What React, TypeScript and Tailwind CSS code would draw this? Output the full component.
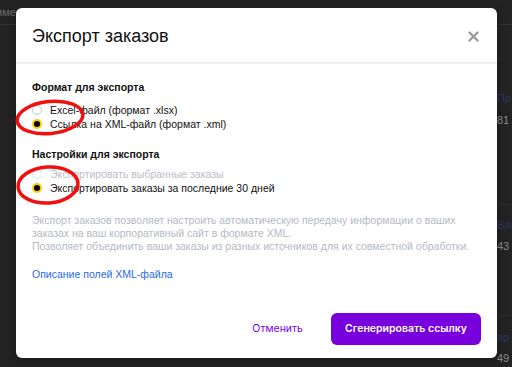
import React from "react";

function Radio({ checked, disabled, label }: { checked?: boolean; disabled?: boolean; label: string }) {
  return (
    <div className="flex items-center h-[14px]">
      {checked ? (
        <span className="w-[10px] h-[10px] rounded-full border-[2px] border-[#ffcc00] bg-black" />
      ) : (
        <span className={"w-[10px] h-[10px] rounded-full border " + (disabled ? "border-[#e4e4e4]" : "border-[#c8c8c8]")} />
      )}
      <span className={"ml-[8px] text-[10.5px] leading-[14px] " + (disabled ? "text-[#b9bdc6]" : "text-[#111]")}>{label}</span>
    </div>
  );
}

export default function App() {
  return (
    <div
      className="relative w-[512px] h-[367px] overflow-hidden bg-[#232323]"
      style={{ fontFamily: '"Liberation Sans", Arial, sans-serif' }}
    >
      {/* background page */}
      <div className="flex flex-col w-full h-full">
        <div className="h-[25px] border-b border-[#313131] flex items-center">
          <span className="ml-[-4px] text-[11px] text-[#6e6e6e]">имен</span>
        </div>
        <div className="flex-1 flex justify-end">
          <div className="w-[15px] flex flex-col text-[11px] overflow-hidden">
            <div className="h-[180px] border-b border-[#2e2e2e] pt-[65px] flex flex-col gap-[5px]">
              <span className="text-[#2b3561] whitespace-nowrap">Пр</span>
              <span className="text-[#8a8a8a] whitespace-nowrap">81</span>
            </div>
            <div className="h-[111px] border-b border-[#2e2e2e] pt-[12px] flex flex-col gap-[4px]">
              <span className="text-[#2b3561] whitespace-nowrap">Вла</span>
              <span className="text-[#8a8a8a] whitespace-nowrap">43</span>
            </div>
            <div className="pt-[13px] flex flex-col gap-[4px]">
              <span className="text-[#2b3561] whitespace-nowrap">ар</span>
              <span className="text-[#8a8a8a] whitespace-nowrap">49</span>
            </div>
          </div>
        </div>
      </div>

      {/* modal */}
      <div className="absolute left-[16px] top-[8px] w-[481px] h-[350px] bg-white rounded-[6px] flex flex-col shadow-[0_2px_8px_rgba(0,0,0,0.3)]">
        <div className="h-[56px] border-b-2 border-[#efefef] flex items-center justify-between pl-[16px] pr-[18px]">
          <span className="text-[18px] text-[#111] pt-[2px]">Экспорт заказов</span>
          <svg width="11" height="11" viewBox="0 0 11 11" className="mt-[2px]">
            <path d="M1.5 1.5 L9.5 9.5 M9.5 1.5 L1.5 9.5" stroke="#9a9a9a" strokeWidth="2.4" strokeLinecap="round" />
          </svg>
        </div>
        <div className="flex flex-col px-[16px] pt-[16px]">
          <div className="text-[10.5px] leading-[14px] font-bold text-[#111]">Формат для экспорта</div>
          <div className="flex flex-col mt-[9px]">
            <Radio label="Excel-файл (формат .xlsx)" />
            <Radio checked label="Ссылка на XML-файл (формат .xml)" />
          </div>
          <div className="text-[10.5px] leading-[14px] font-bold text-[#111] mt-[16px]">Настройки для экспорта</div>
          <div className="flex flex-col mt-[6px]">
            <Radio disabled label="Экспортировать выбранные заказы" />
            <Radio checked label="Экспортировать заказы за последние 30 дней" />
          </div>
          <div className="mt-[19px] text-[10.5px] leading-[13px] text-[#b5b9c3] whitespace-nowrap">
            <div>Экспорт заказов позволяет настроить автоматическую передачу информации о ваших</div>
            <div>заказах на ваш корпоративный сайт в формате XML.</div>
            <div>Позволяет объединить ваши заказы из разных источников для их совместной обработки.</div>
          </div>
          <div className="mt-[14px] text-[10.5px] leading-[14px] text-[#1f6bf0]">Описание полей XML-файла</div>
        </div>
        <div className="mt-auto flex items-center justify-end gap-[28px] px-[16px] pb-[13px]">
          <span className="text-[10.5px] text-[#7a00df]" style={{ fontFamily: 'Inter, "Liberation Sans", sans-serif' }}>Отменить</span>
          <div
            className="w-[150px] h-[32px] rounded-[6px] bg-[#7700dd] flex items-center justify-center text-white text-[10.5px] font-semibold"
            style={{ fontFamily: 'Inter, "Liberation Sans", sans-serif' }}
          >
            Сгенерировать ссылку
          </div>
        </div>
      </div>

      {/* red annotation ellipses */}
      <svg className="absolute left-0 top-0 pointer-events-none" width="512" height="367">
        <ellipse cx="50" cy="117.5" rx="33" ry="16" transform="rotate(-6 50 117.5)" fill="none" stroke="#f01010" strokeWidth="3.5" />
        <ellipse cx="48" cy="185" rx="30" ry="18" transform="rotate(-4 48 185)" fill="none" stroke="#f01010" strokeWidth="3.5" />
      </svg>
    </div>
  );
}
